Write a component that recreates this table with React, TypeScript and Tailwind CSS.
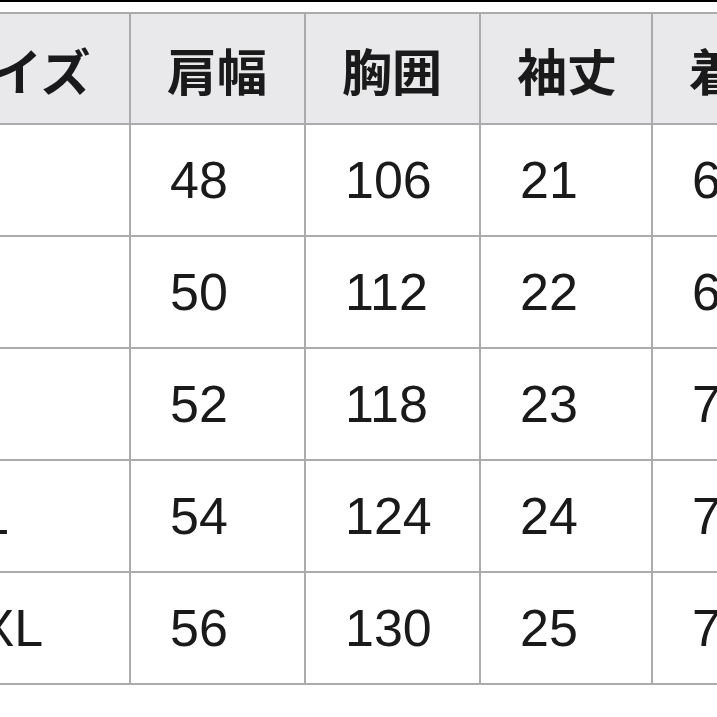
const headers = ["サイズ", "肩幅", "胸囲", "袖丈", "着丈"];

const rows = [
  ["S", "48", "106", "21", "68"],
  ["M", "50", "112", "22", "69"],
  ["L", "52", "118", "23", "70"],
  ["XL", "54", "124", "24", "71"],
  ["XXL", "56", "130", "25", "72"],
];

export default function App() {
  return (
    <div className="w-[717px] h-[717px] overflow-hidden bg-white">
      {/* top edge */}
      <div className="h-[2px] bg-black" />
      <div className="mt-[10px] ml-[-96px]">
        <table className="table-fixed border-collapse w-[1000px]">
          <colgroup>
            <col className="w-[225px]" />
            <col className="w-[175px]" />
            <col className="w-[175px]" />
            <col className="w-[172px]" />
            <col className="w-[253px]" />
          </colgroup>
          <thead>
            <tr className="bg-[#e9e9eb]">
              {headers.map((h) => (
                <th
                  key={h}
                  className="h-[111px] border-2 border-[#ababab] pl-[36px] text-left align-middle font-bold text-[50px] leading-none text-[#1a1a1a] font-['Noto_Sans_CJK_JP',sans-serif]"
                >
                  {h}
                </th>
              ))}
            </tr>
          </thead>
          <tbody>
            {rows.map((r) => (
              <tr key={r[0]}>
                {r.map((c, i) => (
                  <td
                    key={i}
                    className="h-[112px] border-2 border-[#ababab] pl-[39px] text-left align-middle text-[52px] leading-none text-[#1a1a1a] font-['Liberation_Sans',Arial,sans-serif]"
                  >
                    {c}
                  </td>
                ))}
              </tr>
            ))}
          </tbody>
        </table>
      </div>
    </div>
  );
}
